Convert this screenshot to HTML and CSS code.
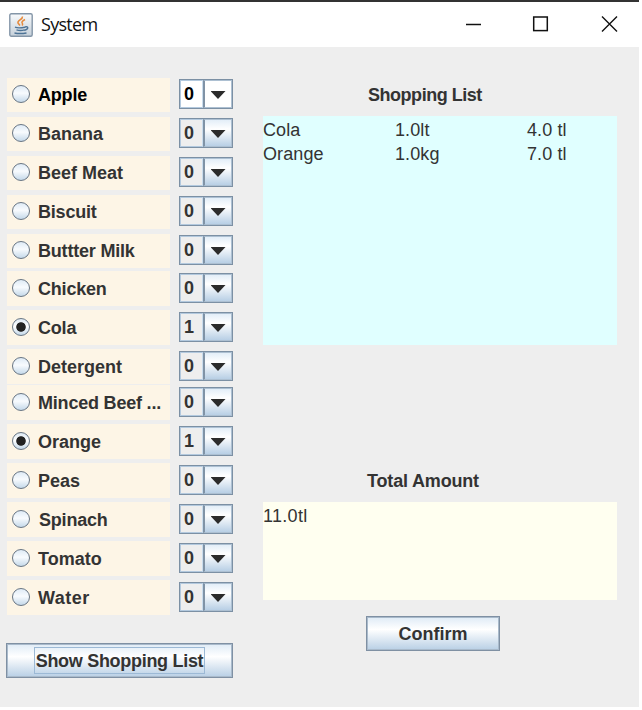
FILE: index.html
```html
<!DOCTYPE html>
<html lang="en">
<head>
<meta charset="utf-8">
<title>System</title>
<link rel="stylesheet" href="styles.css">
</head>
<body>
<div class="window">
  <header class="titlebar">
    <svg class="java" width="24" height="24" viewBox="0 0 24 24">
      <defs><linearGradient id="tile" x2="0" y2="1"><stop stop-color="#f8fafc"/><stop offset="1" stop-color="#c5d0da"/></linearGradient></defs>
      <rect x=".8" y=".8" width="22.4" height="22.4" rx="1.5" fill="url(#tile)" stroke="#8496a8" stroke-width="1.4"/>
      <path d="M13.500 3.500c.5 3-5.500 4-4.500 6.500l2 2.500M16 6.500c-2.500 1.300-4 2.500-2.500 4.200.4.700 0 1.300-.5 1.800" fill="none" stroke="#e58a3c" stroke-width="1.500"/>
      <path d="M6 14.200c2 .8 6 .8 10 0M7.500 16.800c2.500.8 5.500.8 8 0M16 14c4-1.200 3.500 2.500-.5 3.200M5.500 20c3 .6 8 .6 12 0" fill="none" stroke="#4d7396" stroke-width="1.400"/>
    </svg>
    <h1>System</h1>
    <svg class="controls" width="160" height="24" viewBox="0 0 160 24" fill="none" stroke="#111">
      <path d="M6 12.500h15" stroke-width="1.500"/>
      <rect x="73.700" y="5" width="13.600" height="13.600" stroke-width="1.500"/>
      <path d="M142 4.500l15 15M157 4.500l-15 15" stroke-width="1.400"/>
    </svg>
  </header>
  <main class="content">
    <section class="products">
      <div class="row short active"><label class="item tracked"><i class="radio"></i><span>Apple</span></label><div class="combo"><b>0</b><i class="arrow"></i></div></div>
      <div class="row short"><label class="item"><i class="radio"></i><span>Banana</span></label><div class="combo"><b>0</b><i class="arrow"></i></div></div>
      <div class="row short"><label class="item"><i class="radio"></i><span>Beef Meat</span></label><div class="combo"><b>0</b><i class="arrow"></i></div></div>
      <div class="row short"><label class="item tracked"><i class="radio"></i><span>Biscuit</span></label><div class="combo"><b>0</b><i class="arrow"></i></div></div>
      <div class="row short tight"><label class="item tracked"><i class="radio"></i><span>Buttter Milk</span></label><div class="combo"><b>0</b><i class="arrow"></i></div></div>
      <div class="row"><label class="item tracked"><i class="radio"></i><span>Chicken</span></label><div class="combo"><b>0</b><i class="arrow"></i></div></div>
      <div class="row"><label class="item tracked"><i class="radio on"></i><span>Cola</span></label><div class="combo"><b>1</b><i class="arrow"></i></div></div>
      <div class="row joined"><label class="item"><i class="radio"></i><span>Detergent</span></label><div class="combo"><b>0</b><i class="arrow"></i></div></div>
      <div class="row"><label class="item tracked"><i class="radio"></i><span>Minced Beef ...</span></label><div class="combo"><b>0</b><i class="arrow"></i></div></div>
      <div class="row"><label class="item"><i class="radio on"></i><span>Orange</span></label><div class="combo"><b>1</b><i class="arrow"></i></div></div>
      <div class="row"><label class="item"><i class="radio"></i><span>Peas</span></label><div class="combo"><b>0</b><i class="arrow"></i></div></div>
      <div class="row"><label class="item nudge tracked"><i class="radio"></i><span>Spinach</span></label><div class="combo"><b>0</b><i class="arrow"></i></div></div>
      <div class="row"><label class="item"><i class="radio"></i><span>Tomato</span></label><div class="combo"><b>0</b><i class="arrow"></i></div></div>
      <div class="row"><label class="item wide"><i class="radio"></i><span>Water</span></label><div class="combo"><b>0</b><i class="arrow"></i></div></div>
      <button class="btn show"><span>Show Shopping List</span></button>
    </section>
    <section class="summary">
      <h2>Shopping List</h2>
      <div class="list">
        <span>Cola</span><span>1.0lt</span><span>4.0 tl</span>
        <span>Orange</span><span>1.0kg</span><span>7.0 tl</span>
      </div>
      <h2 class="total-title">Total Amount</h2>
      <div class="total">11.0tl</div>
      <button class="btn confirm">Confirm</button>
    </section>
  </main>
</div>
</body>
</html>
```
FILE: styles.css
```css
* { box-sizing: border-box; }
body { margin: 0; background: #fff; font-family: "Liberation Sans", Arial, sans-serif; font-size: 18px; color: #333; }
.window { width: 639px; height: 707px; border-top: 2px solid #333; background: #eee; }
.titlebar { height: 45px; display: flex; align-items: center; background: #fff; padding-left: 9px; }
h1 { margin: 0 0 2px 8px; font: 18px/24px "Open Sans", "Noto Sans", sans-serif; letter-spacing: -.7px; color: #111; }
.java { display: block; }
.controls { margin: 0 19px 2px auto; }
.content { display: flex; padding: 31px 0 0 7px; }
.products { width: 226px; }
.row { display: flex; align-items: flex-start; height: 35px; margin-bottom: 4px; }
.row .item { height: 35px; padding-top: 1px; }
.row.short .item { height: 34px; padding-top: 0; }
.row.tight { margin-bottom: 2px; }
.row.joined { margin-bottom: 1px; }
.item { width: 163px; display: flex; align-items: center; background: #fdf5e6; font-weight: bold; }
.item.tracked { letter-spacing: -.2px; }
.item span { margin-left: 8px; line-height: 20px; padding-bottom: 1px; white-space: nowrap; }
.item.nudge span { margin-left: 9px; }
.item.wide { letter-spacing: .5px; }
.radio { width: 18px; height: 18px; margin: 0 0 2px 5px; border: 1px solid #687584; border-radius: 50%; background: linear-gradient(#dfebf6, #f8fbfe 45%, #c5d9ea); }
.radio.on { background: radial-gradient(circle, #222 0 4.3px, transparent 5.2px), linear-gradient(#dce8f3, #fff 45%, #c5d9ea); }
.combo { width: 54px; height: 30px; margin: 2px 0 0 9px; display: flex; border: 1px solid #7c90a4; background: #eee; }
.short .combo { margin-top: 1px; }
.combo b { width: 23px; padding-left: 3px; border: 1px solid #b3c9de; border-right-color: #c9dced; line-height: 27px; }
.arrow { flex: 1; display: grid; place-items: center; border: 1px solid #adc0d2; border-left: 2px solid #8093a6; background: linear-gradient(#e3eef8, #fff 35%, #b8cfe5); }
.arrow::after { content: ""; width: 15px; height: 8px; background: #2b2b2b; clip-path: polygon(0 0, 100% 0, 50% 100%); margin: 2px 0 0; }
.active, .active .combo { color: #000; }
.active .combo { background: #fff; }
.active .arrow { background: #fff; }
.btn { display: flex; align-items: center; justify-content: center; padding: 0; border: 1px solid #7f90a3; box-shadow: inset 0 0 0 1px #a9bacb; border-radius: 0; background: linear-gradient(#dfebf6, #fff 38%, #b8cfe5); font: bold 18px/24px "Liberation Sans", Arial, sans-serif; color: #333; white-space: nowrap; }
.show { width: 227px; height: 35px; margin: 28px 0 0 -1px; letter-spacing: -.3px; }
.show span { border: 1px solid #9cb9d5; height: 27px; width: 171px; line-height: 27px; }
.summary { width: 354px; margin-left: 30px; }
h2 { margin: 7px 0 11px 105px; font-size: 18px; line-height: 20px; height: 20px; white-space: nowrap; letter-spacing: -.47px; }
.list { height: 229px; background: #e0ffff; display: grid; grid-template-columns: 132px 132px 90px; grid-auto-rows: 24px; align-content: start; line-height: 24px; padding-top: 2px; letter-spacing: .1px; }
.total-title { margin: 126px 0 11px 104px; letter-spacing: -.17px; }
.total { height: 98px; background: #fffff0; padding-top: 2px; line-height: 24px; letter-spacing: .3px; }
.confirm { width: 134px; height: 35px; margin: 16px 0 0 103px; }
```
